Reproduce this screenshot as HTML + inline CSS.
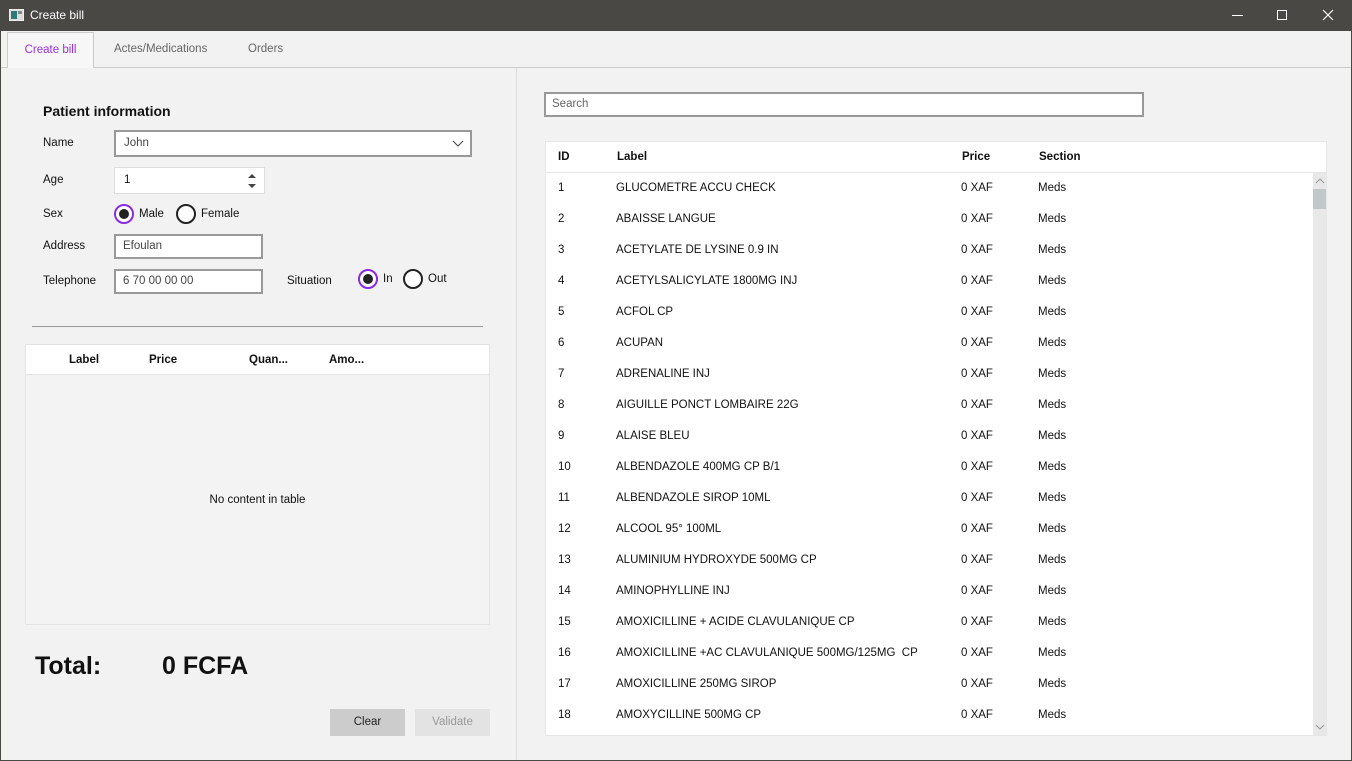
<!DOCTYPE html>
<html><head><meta charset="utf-8"><style>
*{box-sizing:border-box;margin:0;padding:0}
body{width:1352px;height:761px;overflow:hidden;background:#f2f2f2;font-family:"Liberation Sans","DejaVu Sans",sans-serif;font-size:11.5px;color:#111;position:relative}
.a{position:absolute}
.tb{left:0;top:0;width:1352px;height:31px;background:#4a4845;color:#fff}
.win{left:0;top:31px;width:1352px;height:730px;border:1px solid #4a4845;border-top:none}
.inp{background:#fff;border:2px solid #999;}
.radio{width:20px;height:20px;border-radius:50%;border:2px solid #222;background:#fff}
.radio.on{border-color:#8a2be2}
.radio.on::after{content:"";position:absolute;left:3px;top:3px;width:10px;height:10px;border-radius:50%;background:#222}
.row{position:absolute;left:0;width:768px;height:31px;line-height:31px}
.row span{position:absolute}
</style></head><body>
<div class="a tb">
  <div class="a" style="left:9px;top:9px;width:15px;height:12px;background:#ddd;border:1px solid #eee"><div class="a" style="left:1px;top:1px;width:6px;height:8px;background:#2e7a7a"></div><div class="a" style="left:8px;top:1px;width:4px;height:3px;background:#888"></div></div>
  <div class="a" style="left:30px;top:8px;font-size:12px">Create bill</div>
  <div class="a" style="left:1232px;top:15px;width:11px;height:1px;background:#fff"></div>
  <div class="a" style="left:1277px;top:10px;width:10px;height:10px;border:1px solid #fff"></div>
  <svg class="a" style="left:1322px;top:9px" width="12" height="12"><path d="M1 1L11 11M11 1L1 11" stroke="#fff" stroke-width="1.2"/></svg>
</div>
<div class="a win"></div>
<div class="a" style="left:1px;top:67px;width:1350px;height:1px;background:#ccc"></div>
<div class="a" style="left:7px;top:32px;width:87px;height:36px;background:#f7f7f7;border:1px solid #ccc;border-bottom:none;color:#9b30e6;text-align:center;line-height:34px">Create bill</div>
<div class="a" style="left:114px;top:43px;color:#666">Actes/Medications</div>
<div class="a" style="left:248px;top:43px;color:#666">Orders</div>
<div class="a" style="left:516px;top:68px;width:1px;height:692px;background:#ddd"></div>
<div class="a" style="left:43px;top:103px;font-size:14px;font-weight:bold">Patient information</div>
<div class="a" style="left:43px;top:137px">Name</div>
<div class="a inp" style="left:114px;top:130px;width:358px;height:27px"><span class="a" style="left:8px;top:5px;color:#444">John</span>
<svg class="a" style="left:336px;top:8px" width="12" height="8"><path d="M1 1L6 6L11 1" stroke="#444" fill="none"/></svg></div>
<div class="a" style="left:43px;top:174px">Age</div>
<div class="a" style="left:114px;top:167px;width:151px;height:27px;background:#fff;border:1px solid #ddd"><span class="a" style="left:9px;top:6px">1</span>
<svg class="a" style="left:132px;top:4px" width="10" height="18"><path d="M1 6L5 2L9 6Z M1 12L9 12L5 16Z" fill="#444"/></svg></div>
<div class="a" style="left:43px;top:208px">Sex</div>
<div class="a radio on" style="left:114px;top:204px"></div><div class="a" style="left:139px;top:208px">Male</div>
<div class="a radio" style="left:176px;top:204px"></div><div class="a" style="left:201px;top:208px">Female</div>
<div class="a" style="left:43px;top:240px">Address</div>
<div class="a inp" style="left:114px;top:234px;width:149px;height:25px"><span class="a" style="left:7px;top:4px;color:#444">Efoulan</span></div>
<div class="a" style="left:43px;top:275px">Telephone</div>
<div class="a inp" style="left:114px;top:269px;width:149px;height:25px"><span class="a" style="left:7px;top:4px;color:#444">6 70 00 00 00</span></div>
<div class="a" style="left:287px;top:275px">Situation</div>
<div class="a radio on" style="left:358px;top:269px"></div><div class="a" style="left:383px;top:273px">In</div>
<div class="a radio" style="left:403px;top:269px"></div><div class="a" style="left:428px;top:273px">Out</div>
<div class="a" style="left:32px;top:326px;width:451px;height:1px;background:#999"></div>
<div class="a" style="left:25px;top:344px;width:465px;height:281px;background:#f3f3f3;border:1px solid #e4e4e4"></div>
<div class="a" style="left:26px;top:345px;width:463px;height:30px;background:#fff;border-bottom:1px solid #e4e4e4"></div>
<div class="a" style="left:69px;top:354px;font-weight:bold">Label</div>
<div class="a" style="left:149px;top:354px;font-weight:bold">Price</div>
<div class="a" style="left:249px;top:354px;font-weight:bold">Quan...</div>
<div class="a" style="left:329px;top:354px;font-weight:bold">Amo...</div>
<div class="a" style="left:25px;top:494px;width:465px;text-align:center">No content in table</div>
<div class="a" style="left:35px;top:652px;font-size:25px;font-weight:bold">Total:</div>
<div class="a" style="left:162px;top:652px;font-size:25px;font-weight:bold">0 FCFA</div>
<div class="a" style="left:330px;top:709px;width:75px;height:27px;background:#ccc;text-align:center;line-height:27px;color:#222">Clear</div>
<div class="a" style="left:415px;top:709px;width:75px;height:27px;background:#e3e3e3;text-align:center;line-height:27px;color:#999">Validate</div>
<div class="a inp" style="left:544px;top:92px;width:600px;height:25px"><span class="a" style="left:6px;top:4px;color:#666">Search</span></div>
<div class="a" style="left:545px;top:141px;width:782px;height:595px;background:#fff;border:1px solid #e6e6e6">
  <div class="a" style="left:0;top:0;width:780px;height:31px;border-bottom:1px solid #e6e6e6;line-height:31px;font-weight:bold">
    <span class="a" style="left:12px">ID</span><span class="a" style="left:71px">Label</span><span class="a" style="left:416px">Price</span><span class="a" style="left:493px">Section</span>
  </div>
  <div class="a" style="left:767px;top:31px;width:13px;height:562px;background:#e8e8e8"></div>
  <div class="a" style="left:767px;top:47px;width:13px;height:20px;background:#c2c7ca"></div>
  <svg class="a" style="left:769px;top:36px" width="10" height="6"><path d="M1 5L5 1L9 5" stroke="#999" fill="none"/></svg>
  <svg class="a" style="left:769px;top:582px" width="10" height="6"><path d="M1 1L5 5L9 1" stroke="#999" fill="none"/></svg>
  <div class="a" style="left:0;top:31px;width:767px;height:562px;overflow:hidden">
  <div class="row" style="top:0"><span style="left:12px">1</span><span style="left:70px">GLUCOMETRE ACCU CHECK</span><span style="left:415px">0 XAF</span><span style="left:492px">Meds</span></div>
  <div class="row" style="top:31px"><span style="left:12px">2</span><span style="left:70px">ABAISSE LANGUE</span><span style="left:415px">0 XAF</span><span style="left:492px">Meds</span></div>
  <div class="row" style="top:62px"><span style="left:12px">3</span><span style="left:70px">ACETYLATE DE LYSINE 0.9 IN</span><span style="left:415px">0 XAF</span><span style="left:492px">Meds</span></div>
  <div class="row" style="top:93px"><span style="left:12px">4</span><span style="left:70px">ACETYLSALICYLATE 1800MG INJ</span><span style="left:415px">0 XAF</span><span style="left:492px">Meds</span></div>
  <div class="row" style="top:124px"><span style="left:12px">5</span><span style="left:70px">ACFOL CP</span><span style="left:415px">0 XAF</span><span style="left:492px">Meds</span></div>
  <div class="row" style="top:155px"><span style="left:12px">6</span><span style="left:70px">ACUPAN</span><span style="left:415px">0 XAF</span><span style="left:492px">Meds</span></div>
  <div class="row" style="top:186px"><span style="left:12px">7</span><span style="left:70px">ADRENALINE INJ</span><span style="left:415px">0 XAF</span><span style="left:492px">Meds</span></div>
  <div class="row" style="top:217px"><span style="left:12px">8</span><span style="left:70px">AIGUILLE PONCT LOMBAIRE 22G</span><span style="left:415px">0 XAF</span><span style="left:492px">Meds</span></div>
  <div class="row" style="top:248px"><span style="left:12px">9</span><span style="left:70px">ALAISE BLEU</span><span style="left:415px">0 XAF</span><span style="left:492px">Meds</span></div>
  <div class="row" style="top:279px"><span style="left:12px">10</span><span style="left:70px">ALBENDAZOLE 400MG CP B/1</span><span style="left:415px">0 XAF</span><span style="left:492px">Meds</span></div>
  <div class="row" style="top:310px"><span style="left:12px">11</span><span style="left:70px">ALBENDAZOLE SIROP 10ML</span><span style="left:415px">0 XAF</span><span style="left:492px">Meds</span></div>
  <div class="row" style="top:341px"><span style="left:12px">12</span><span style="left:70px">ALCOOL 95° 100ML</span><span style="left:415px">0 XAF</span><span style="left:492px">Meds</span></div>
  <div class="row" style="top:372px"><span style="left:12px">13</span><span style="left:70px">ALUMINIUM HYDROXYDE 500MG CP</span><span style="left:415px">0 XAF</span><span style="left:492px">Meds</span></div>
  <div class="row" style="top:403px"><span style="left:12px">14</span><span style="left:70px">AMINOPHYLLINE INJ</span><span style="left:415px">0 XAF</span><span style="left:492px">Meds</span></div>
  <div class="row" style="top:434px"><span style="left:12px">15</span><span style="left:70px">AMOXICILLINE + ACIDE CLAVULANIQUE CP</span><span style="left:415px">0 XAF</span><span style="left:492px">Meds</span></div>
  <div class="row" style="top:465px"><span style="left:12px">16</span><span style="left:70px">AMOXICILLINE +AC CLAVULANIQUE 500MG/125MG&nbsp; CP</span><span style="left:415px">0 XAF</span><span style="left:492px">Meds</span></div>
  <div class="row" style="top:496px"><span style="left:12px">17</span><span style="left:70px">AMOXICILLINE 250MG SIROP</span><span style="left:415px">0 XAF</span><span style="left:492px">Meds</span></div>
  <div class="row" style="top:527px"><span style="left:12px">18</span><span style="left:70px">AMOXYCILLINE 500MG CP</span><span style="left:415px">0 XAF</span><span style="left:492px">Meds</span></div>
  </div>
</div>
</body></html>
